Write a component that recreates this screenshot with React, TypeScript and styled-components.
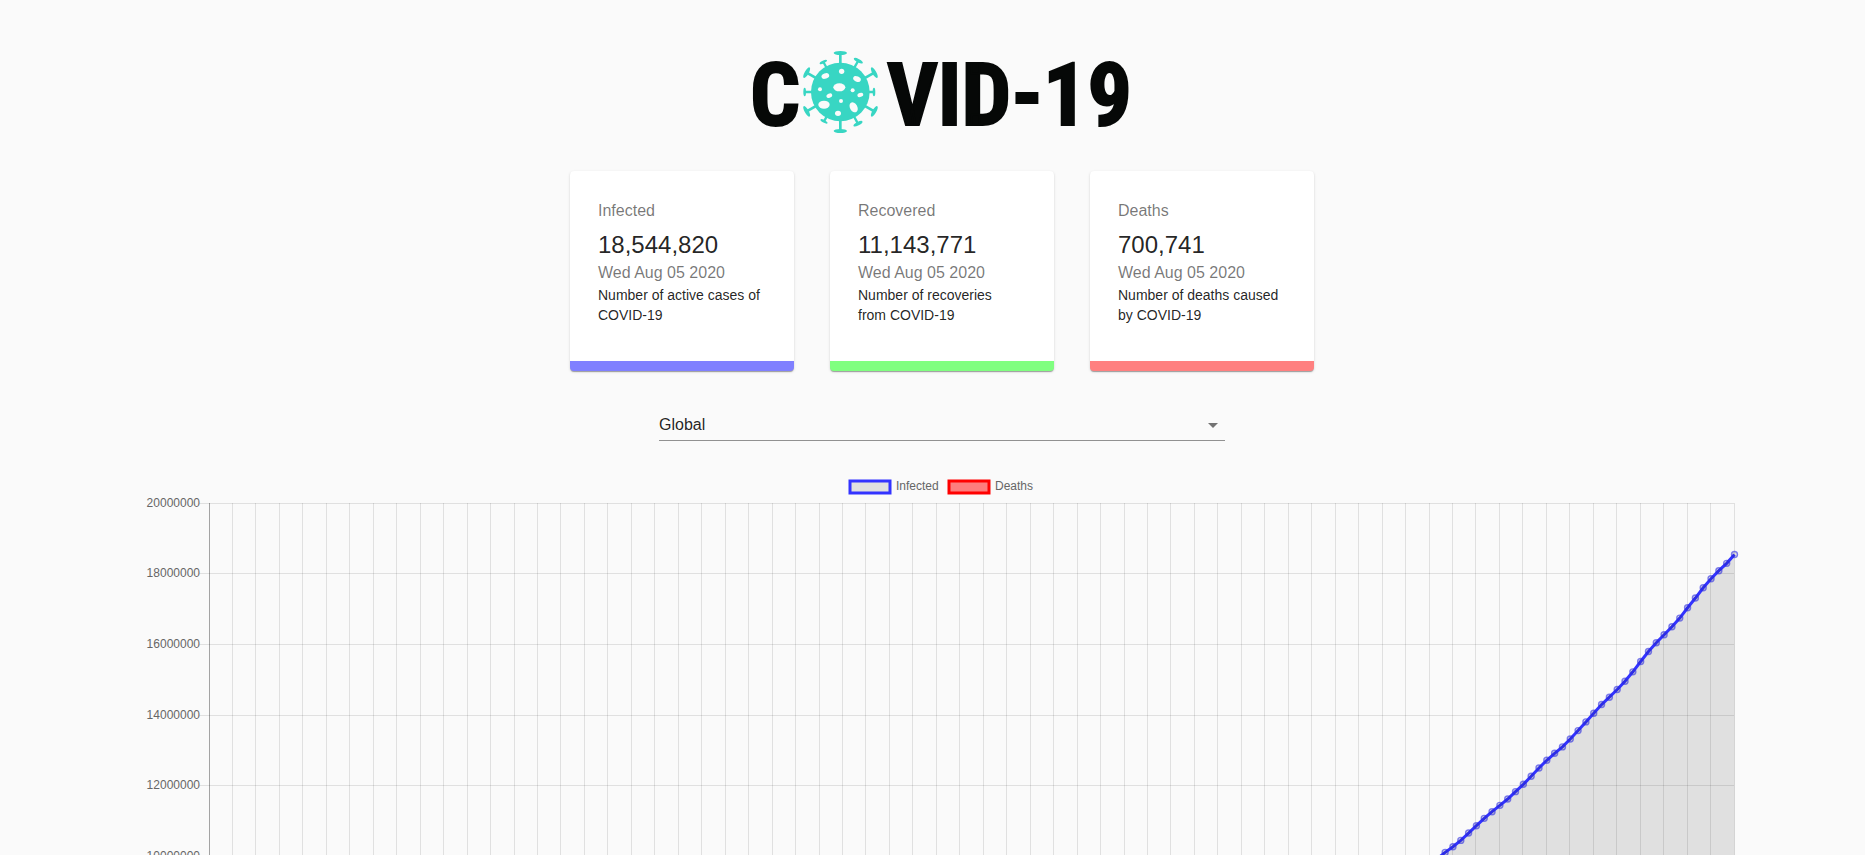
import React, { useState } from 'react';
import styled, { createGlobalStyle } from 'styled-components';

const GlobalStyle = createGlobalStyle`
  body {
    margin: 0;
    background: #fafafa;
    color: rgba(0, 0, 0, 0.87);
    font-family: 'Liberation Sans', Arial, sans-serif;
  }
`;

const Page = styled.main`
  display: flex;
  flex-direction: column;
  align-items: center;
  padding: 40px 0 0 19px;
`;

const LogoImage = styled.svg`
  display: block;
  width: 400px;
  height: 100px;
  max-width: 100%;
`;

const Cards = styled.section`
  display: flex;
  flex-wrap: wrap;
  justify-content: center;
  gap: 36px;
  margin-top: 31px;
`;

const Card = styled.article<{ $accent: string }>`
  box-sizing: border-box;
  width: 224px;
  padding: 28px 32px 36px 28px;
  background: #fff;
  border-bottom: 10px solid ${(p) => p.$accent};
  border-radius: 4px;
  box-shadow:
    0 2px 1px -1px rgba(0, 0, 0, 0.2),
    0 1px 1px 0 rgba(0, 0, 0, 0.14),
    0 1px 3px 0 rgba(0, 0, 0, 0.12);
`;

const Muted = styled.p`
  margin: 0;
  font-size: 16px;
  line-height: 24px;
  color: rgba(0, 0, 0, 0.54);
`;

const CardTitle = styled(Muted).attrs({ as: 'h2' })`
  margin-bottom: 6px;
  font-weight: 400;
`;

const Count = styled.p`
  margin: 0;
  font-size: 24px;
  line-height: 32px;
`;

const Description = styled.p`
  margin: 0;
  font-size: 14px;
  line-height: 20px;
`;

const Picker = styled.div`
  display: grid;
  align-items: center;
  width: 566px;
  max-width: 90%;
  margin: 38px 0 30px;
`;

const CountrySelect = styled.select`
  grid-area: 1 / 1;
  width: 100%;
  height: 32px;
  padding: 0 24px 0 0;
  border: 0;
  border-bottom: 1px solid rgba(0, 0, 0, 0.42);
  border-radius: 0;
  background: transparent;
  color: inherit;
  font: 16px 'Liberation Sans', Arial, sans-serif;
  appearance: none;
  cursor: pointer;
`;

const Arrow = styled.svg`
  grid-area: 1 / 1;
  justify-self: end;
  width: 24px;
  height: 24px;
  fill: rgba(0, 0, 0, 0.54);
  pointer-events: none;
`;

const ChartImage = styled.svg`
  display: block;
  width: 100%;
  max-width: 1600px;
  font: 12px 'Liberation Sans', Arial, sans-serif;
`;

const SPIKES: [number, number, number, number, number, number][] = [
  // tip x, tip y, half width of the cap, half height, rotation, stem width
  [301, 39, 20, 6, 0, 8],
  [301, 273, 20, 6, 0, 8],
  [194, 156, 13, 4, -90, 7],
  [402, 156, 13, 4, 90, 7],
  [200, 98, 18, 6, -60, 8],
  [403, 98, 18, 6, 60, 8],
  [200, 214, 18, 6, 60, 8],
  [403, 214, 18, 6, -60, 8],
  [250, 66, 12, 4, -25, 7],
  [355, 62, 15, 5, 28, 7],
  [252, 244, 12, 4, 28, 7],
  [354, 251, 15, 5, -27, 7],
];

const SPOTS: [number, number, number, number, number][] = [
  [305, 94, 8, 8, 0],
  [256, 108, 12, 8, -20],
  [351, 117, 12, 8, 25],
  [298, 142, 18, 12, 0],
  [240, 148, 6, 6, 0],
  [338, 151, 6, 6, 0],
  [268, 167, 9, 6, -25],
  [361, 165, 9, 6, -20],
  [252, 194, 17, 12, 0],
  [303, 183, 6, 6, 0],
  [341, 202, 16, 11, 60],
  [294, 220, 9, 8, 0],
];

function Logo() {
  return (
    <LogoImage viewBox="0 0 400 100" role="img" aria-label="COVID-19">
      <g
        fill="#060807"
        stroke="#060807"
        strokeWidth="2"
        fontFamily="'Roboto Condensed', 'Liberation Sans Narrow', 'Liberation Sans', sans-serif"
        fontWeight="700"
        fontSize="88"
      >
        <text x="8" y="85">C</text>
        <text x="145" y="85">VID-19</text>
      </g>
      <g transform="translate(-2 0) scale(0.3333)" fill="#38d6c3">
        {SPIKES.map(([x, y, rx, ry, angle, stem]) => (
          <g key={`${x}-${y}`}>
            <line x1="301" y1="156" x2={x} y2={y} stroke="#38d6c3" strokeWidth={stem} />
            <ellipse cx={x} cy={y} rx={rx} ry={ry} transform={`rotate(${angle} ${x} ${y})`} />
          </g>
        ))}
        <circle cx="301" cy="156" r="88" />
        {SPOTS.map(([x, y, rx, ry, angle]) => (
          <ellipse key={`${x}-${y}`} cx={x} cy={y} rx={rx} ry={ry} fill="#fafafa" transform={`rotate(${angle} ${x} ${y})`} />
        ))}
      </g>
    </LogoImage>
  );
}

/* Totals in millions; a pair is [day, total], days between pairs are interpolated. */
const EARLY_INFECTED: [number, number][] = [
  [0, 0], [20, 0.05], [50, 0.15], [60, 0.35], [70, 0.9], [80, 1.7], [100, 3.2], [120, 5], [140, 7.4], [157, 9.94],
];
const LATE_INFECTED = [
  10.116, 10.276, 10.456, 10.663, 10.871, 11.079, 11.268, 11.447, 11.626, 11.834, 12.042, 12.269, 12.505,
  12.722, 12.92, 13.1, 13.326, 13.562, 13.808, 14.053, 14.298, 14.506, 14.723, 14.959, 15.224, 15.517, 15.8,
  16.045, 16.272, 16.499, 16.744, 17.037, 17.311, 17.603, 17.858, 18.085, 18.293, 18.545,
];
const DEATH_MARKS: [number, number][] = [[0, 0], [60, 0.015], [80, 0.1], [100, 0.23], [140, 0.42], [195, 0.701]];

function interpolate(marks: [number, number][]): number[] {
  const values: number[] = [];
  for (let i = 0; i < marks.length - 1; i++) {
    const [d0, v0] = marks[i];
    const [d1, v1] = marks[i + 1];
    for (let d = d0; d < d1; d++) values.push(v0 + ((v1 - v0) * (d - d0)) / (d1 - d0));
  }
  values.push(marks[marks.length - 1][1]);
  return values;
}

const INFECTED = [...interpolate(EARLY_INFECTED), ...LATE_INFECTED];
const DEATHS = interpolate(DEATH_MARKS);

const LEFT = 67;
const RIGHT = 1592;
const TOP = 32;
const BOTTOM = 739;
const DAYS = 195;
const dayX = (day: number) => LEFT + ((RIGHT - LEFT) * day) / DAYS;
const totalY = (total: number) => BOTTOM - ((BOTTOM - TOP) * total) / 20;

const SERIES = [
  { name: 'Deaths', values: DEATHS, line: '#ff0000', fill: 'rgba(255,0,0,0.5)', point: 'rgba(255,0,0,0.5)' },
  { name: 'Infected', values: INFECTED, line: '#3333ff', fill: 'rgba(0,0,0,0.1)', point: 'rgba(45,45,230,0.6)' },
];

function Chart() {
  const columns = Array.from({ length: DAYS / 3 + 1 }, (_, i) => Math.floor(dayX(i * 3)));
  const rows = Array.from({ length: 11 }, (_, i) => i * 2);
  return (
    <ChartImage viewBox="0 0 1600 800" role="img" aria-label="Infected and deaths over time">
      <g strokeWidth="3">
        <rect x="708" y="10" width="40" height="12" fill="rgba(0,0,0,0.1)" stroke="#3333ff" />
        <rect x="807" y="10" width="40" height="12" fill="rgba(255,0,0,0.5)" stroke="#ff0000" />
      </g>
      <g fill="#666">
        <text x="754" y="19">Infected</text>
        <text x="853" y="19">Deaths</text>
      </g>
      {columns.map((x, i) => (
        <rect key={x} x={x} y={TOP} width="1" height={BOTTOM - TOP + 10} fill={i === 0 ? 'rgba(0,0,0,0.35)' : 'rgba(0,0,0,0.1)'} />
      ))}
      {rows.map((total) => {
        const y = Math.floor(totalY(total));
        return (
          <g key={total}>
            <rect x={LEFT - 10} y={y} width={RIGHT - LEFT + 10} height="1" fill="rgba(0,0,0,0.1)" />
            <text x={LEFT - 9} y={y + 4} textAnchor="end" fill="#666">
              {total * 1000000}
            </text>
          </g>
        );
      })}
      {SERIES.map(({ name, values, line, fill, point }) => {
        const points = values.map((v, day) => `${dayX(day) + 0.5},${totalY(v)}`).join(' ');
        return (
          <g key={name}>
            <polygon points={`${LEFT},${BOTTOM} ${points} ${RIGHT + 0.5},${BOTTOM}`} fill={fill} />
            <polyline points={points} fill="none" stroke={line} strokeWidth="3" />
            {values.map((v, day) => (
              <circle key={day} cx={dayX(day) + 0.5} cy={totalY(v)} r="3" fill="rgba(0,0,0,0.1)" stroke={point} strokeWidth="1.4" />
            ))}
          </g>
        );
      })}
    </ChartImage>
  );
}

const DATE = 'Wed Aug 05 2020';
const TOTALS = [
  { title: 'Infected', count: 18544820, text: 'Number of active cases of COVID-19', accent: '#8080ff' },
  { title: 'Recovered', count: 11143771, text: 'Number of recoveries from COVID-19', accent: '#80ff80' },
  { title: 'Deaths', count: 700741, text: 'Number of deaths caused by COVID-19', accent: '#ff8080' },
];

export default function App() {
  const [country, setCountry] = useState('Global');
  return (
    <>
      <GlobalStyle />
      <Page>
        <Logo />
        <Cards>
          {TOTALS.map(({ title, count, text, accent }) => (
            <Card key={title} $accent={accent}>
              <CardTitle>{title}</CardTitle>
              <Count>{count.toLocaleString('en-US')}</Count>
              <Muted>{DATE}</Muted>
              <Description>{text}</Description>
            </Card>
          ))}
        </Cards>
        <Picker>
          <CountrySelect aria-label="Country" value={country} onChange={(e) => setCountry(e.target.value)}>
            <option>Global</option>
          </CountrySelect>
          <Arrow viewBox="0 0 24 24" aria-hidden="true">
            <path d="M7 10l5 5 5-5z" />
          </Arrow>
        </Picker>
        <Chart />
      </Page>
    </>
  );
}
